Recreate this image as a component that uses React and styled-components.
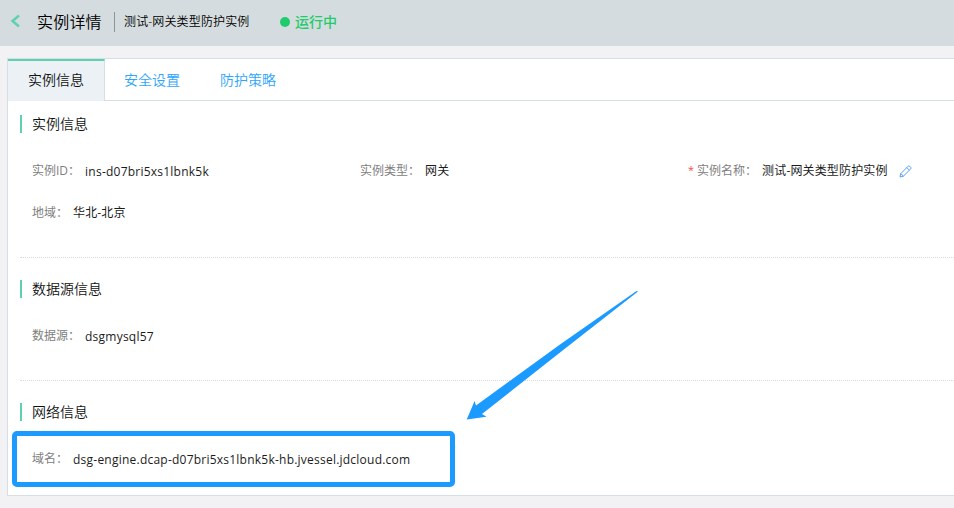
import React from "react";
import styled, { createGlobalStyle } from "styled-components";

const GlobalStyle = createGlobalStyle`
  * { box-sizing: border-box; }
  html, body { margin: 0; padding: 0; }
  body {
    background: #f2f2f5;
    color: #1c1c1c;
    font: 12px/18px "Open Sans", "Noto Sans CJK SC", sans-serif;
    overflow: hidden;
  }
`;

const Page = styled.div`
  position: relative;
  width: 954px;
  height: 508px;
  overflow: hidden;
  white-space: nowrap;
`;

const Header = styled.header`
  display: flex;
  align-items: center;
  height: 46px;
  padding: 0 0 3px 10px;
  background: #d5dcdf;
`;

const BackIcon = styled.svg`
  display: block;
  width: 10px;
  height: 14px;
  margin: 0 17px 1px 0;
`;

const PageTitle = styled.h1`
  margin: 0;
  width: 77px;
  font-size: 16px;
  font-weight: 350;
  letter-spacing: 0.2px;
  line-height: 22px;
  color: #000;
`;

const InstanceName = styled.div`
  display: flex;
  align-items: center;
  height: 20px;
  padding-left: 9px;
  border-left: 1px solid #8f9496;
  color: #000;
  font-weight: 350;
  letter-spacing: 0.15px;
  width: 166px;
`;

const Status = styled.div`
  display: flex;
  align-items: center;
  gap: 5px;
  color: #1fcb6b;
  font-size: 14px;
  font-weight: 500;
`;

const StatusDot = styled.span`
  width: 10px;
  height: 10px;
  border-radius: 50%;
  background: #1fcb6b;
`;

const Card = styled.main`
  margin: 12px 0 0 7px;
  height: 438px;
  background: #fff;
  border: 1px solid #d5dfe5;
  border-right: 0;
`;

const Tabs = styled.nav`
  display: flex;
  height: 42px;
  border-bottom: 1px solid #d5dfe5;
`;

const Tab = styled.div`
  display: flex;
  align-items: center;
  justify-content: center;
  width: ${(p) => (p.$active ? 97 : 96)}px;
  height: ${(p) => (p.$active ? 42 : 41)}px;
  padding: ${(p) => (p.$active ? "0 0 2px" : "0 2px 1px 0")};
  font-size: 14px;
  font-weight: 350;
  color: ${(p) => (p.$active ? "#111" : "#2ea5fb")};
  background: ${(p) => (p.$active ? "#ecf1f5" : "transparent")};
  border-top: 2px solid ${(p) => (p.$active ? "#5fd0b2" : "transparent")};
  border-right: ${(p) => (p.$active ? "1px solid #d5dfe5" : "0")};
`;

const Section = styled.section`
  margin-left: 12px;
  padding: ${(p) => (p.$first ? 14 : 22)}px 0 23px;
  border-bottom: ${(p) => (p.$last ? "0" : "1px dotted #d5dadd")};
`;

const SectionTitle = styled.h2`
  margin: 0 0 17px;
  padding-left: 10px;
  border-left: 2px solid #5fd0b2;
  font-size: 14px;
  font-weight: 350;
  line-height: 18px;
  color: #111;
`;

const Fields = styled.div`
  display: grid;
  grid-template-columns: 328px 328px 1fr;
  grid-auto-rows: 42px;
  padding-left: 12px;
`;

const Field = styled.div`
  display: flex;
  align-items: center;
`;

const Label = styled.span`
  color: #808080;
  margin-right: 5px;
`;

const Required = styled.span`
  color: #f0504c;
  font-size: 11px;
  margin: -2px 3px 0 0;
`;

const Value = styled.span`
  letter-spacing: ${(p) => (p.$latin ? 0.23 : 0.15)}px;
  padding-top: ${(p) => (p.$latin ? 2 : 0)}px;
`;

const EditIcon = styled.svg`
  display: block;
  width: 13px;
  height: 13px;
  margin: 1px 0 0 11px;
`;

const Highlight = styled.div`
  position: absolute;
  left: 12px;
  top: 431px;
  width: 443px;
  height: 56px;
  border: 5px solid #1b9aff;
  border-radius: 5px;
`;

const Arrow = styled.svg`
  position: absolute;
  left: 460px;
  top: 285px;
  width: 185px;
  height: 140px;
`;

function Item({ label, value, latin, required, editable }) {
  return (
    <Field>
      {required && <Required>*</Required>}
      <Label lang="zh-CN">{label}：</Label>
      <Value $latin={latin}>{value}</Value>
      {editable && (
        <EditIcon viewBox="0 0 13 13" fill="none" stroke="#579ff5" strokeWidth="1">
          <path d="M1 12 L1.8 8.6 L9.2 1.2 Q9.9 .6 10.6 1.2 L11.8 2.4 Q12.4 3.1 11.8 3.8 L4.4 11.2 Z M7.8 2.6 L10.4 5.2 M1.8 8.6 L4.4 11.2" />
        </EditIcon>
      )}
    </Field>
  );
}

export default function App() {
  return (
    <>
      <GlobalStyle />
      <Page>
        <Header>
          <BackIcon viewBox="0 0 10 14" fill="none" stroke="#5fd0b2" strokeWidth="2.5">
            <path d="M9 1.5 L2.5 7 L9 12.5" />
          </BackIcon>
          <PageTitle>实例详情</PageTitle>
          <InstanceName>测试-网关类型防护实例</InstanceName>
          <Status>
            <StatusDot />
            运行中
          </Status>
        </Header>
        <Card>
          <Tabs>
            <Tab $active>实例信息</Tab>
            <Tab>安全设置</Tab>
            <Tab>防护策略</Tab>
          </Tabs>
          <Section $first>
            <SectionTitle>实例信息</SectionTitle>
            <Fields>
              <Item label="实例ID" value="ins-d07bri5xs1lbnk5k" latin />
              <Item label="实例类型" value="网关" />
              <Item label="实例名称" value="测试-网关类型防护实例" required editable />
              <Item label="地域" value="华北-北京" />
            </Fields>
          </Section>
          <Section>
            <SectionTitle>数据源信息</SectionTitle>
            <Fields>
              <Item label="数据源" value="dsgmysql57" latin />
            </Fields>
          </Section>
          <Section $last>
            <SectionTitle>网络信息</SectionTitle>
            <Fields>
              <Item label="域名" value="dsg-engine.dcap-d07bri5xs1lbnk5k-hb.jvessel.jdcloud.com" latin />
            </Fields>
          </Section>
        </Card>
        <Highlight />
        <Arrow viewBox="460 285 185 140" fill="#1b9aff">
          <path d="M466.7 419.5 L474.6 401 L476 405.5 L560 344.5 L636.5 291 L638 291.5 L560 352.5 L482 414 L486.5 416.7 Z" />
        </Arrow>
      </Page>
    </>
  );
}
